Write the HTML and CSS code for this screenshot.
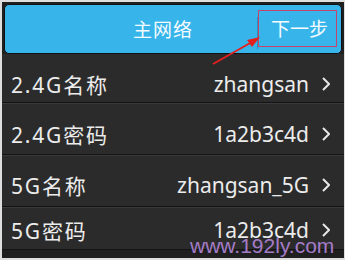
FILE: index.html
```html
<!DOCTYPE html>
<html lang="zh-CN">
<head>
<meta charset="utf-8">
<title>主网络</title>
<link rel="stylesheet" href="styles.css">
</head>
<body>
<div class="frame">
  <div class="header">
    <div class="title">主网络</div>
    <div class="divider"></div>
    <div class="next">下一步</div>
  </div>
  <div class="list">
    <div class="row r1"><span class="label">2.4G名称</span><span class="value">zhangsan<svg class="chev" width="8" height="14" viewBox="0 0 8 14"><polyline points="1,1 7,7 1,13" /></svg></span></div>
    <div class="row r2"><span class="label">2.4G密码</span><span class="value">1a2b3c4d<svg class="chev" width="8" height="14" viewBox="0 0 8 14"><polyline points="1,1 7,7 1,13" /></svg></span></div>
    <div class="row r3"><span class="label">5G名称</span><span class="value">zhangsan_5G<svg class="chev" width="8" height="14" viewBox="0 0 8 14"><polyline points="1,1 7,7 1,13" /></svg></span></div>
    <div class="row r4"><span class="label">5G密码</span><span class="value">1a2b3c4d<svg class="chev" width="8" height="14" viewBox="0 0 8 14"><polyline points="1,1 7,7 1,13" /></svg></span></div>
  </div>
  <div class="mark-box"></div>
  <svg class="arrow" width="60" height="40" viewBox="0 0 60 40">
    <line x1="3" y1="34" x2="42" y2="12" />
    <polygon points="50,7 37,10 42,17" />
  </svg>
  <div class="watermark">www.192ly.com</div>
</div>
</body>
</html>
```

FILE: styles.css
```css
html, body {
  margin: 0;
  padding: 0;
}
body {
  width: 345px;
  height: 260px;
  overflow: hidden;
  background: #dedede;
  font-family: "Noto Sans", "Noto Sans CJK SC", sans-serif;
}
.frame {
  position: relative;
  margin: 2px 1px 0 2px;
  height: 256px;
  background: #1f1f1f;
  padding: 2px 2px 0 2px;
  box-sizing: border-box;
  overflow: hidden;
}
.header {
  height: 48px;
  background: #37b5ea;
  border: 1px solid #111;
  border-radius: 5px;
  display: flex;
  align-items: center;
  color: #f4fbff;
  font-size: 19px;
}
.title {
  flex: 1;
  text-align: center;
  padding-left: 64px;
  letter-spacing: 1px;
}
.divider {
  width: 1px;
  height: 32px;
  margin-top: 8px;
  background: #2b8fc0;
}
.next {
  width: 83px;
  padding-left: 13px;
  box-sizing: border-box;
  margin-top: -2px;
}
.list {
  margin: 0 -2px;
}
.row {
  height: 49px;
  display: flex;
  align-items: center;
  justify-content: space-between;
  padding: 6px 14px 0 9px;
  box-sizing: border-box;
  background: #2b2b2b;
  border-bottom: 1px solid #141414;
  border-top: 1px solid #3a3a3a;
  color: #ececec;
  font-size: 21px;
}
.row.r1 {
  border-top: none;
  height: 49px;
  padding-top: 11px;
}
.row.r2 {
  height: 52px;
  padding-top: 9px;
}
.row.r3 {
  height: 52px;
  padding-top: 7px;
}
.row.r4 {
  height: 43px;
  padding-top: 2px;
}
.label {
  letter-spacing: 1.8px;
}
.value {
  display: flex;
  align-items: center;
}
.chev {
  margin-left: 13px;
  fill: none;
  stroke: #e6e6e6;
  stroke-width: 2;
}
.mark-box {
  position: absolute;
  left: 256px;
  top: 8px;
  width: 79px;
  height: 37px;
  border: 1px solid #c4456a;
  box-sizing: border-box;
}
.arrow {
  position: absolute;
  left: 208px;
  top: 28px;
}
.arrow line {
  stroke: #e3201e;
  stroke-width: 2;
}
.arrow polygon {
  fill: #e3201e;
}
.watermark {
  position: absolute;
  left: 188px;
  top: 233px;
  font-family: "Liberation Sans", Arial, sans-serif;
  font-size: 21px;
  line-height: 21px;
  color: #a57cc8;
}
```
